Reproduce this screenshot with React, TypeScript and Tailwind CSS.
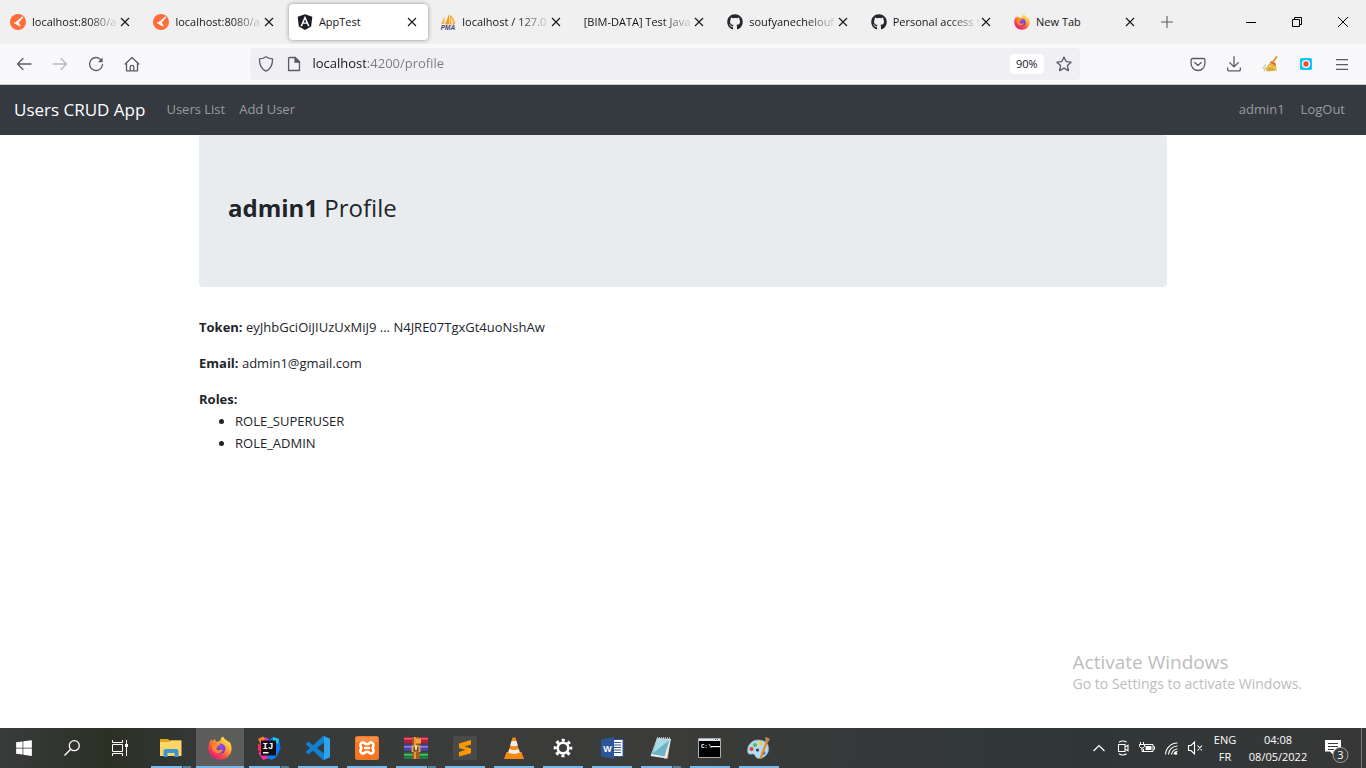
import type { ReactNode } from "react";
import { FaAngular, FaGithub, FaWindows } from "react-icons/fa";

const iconButton = "flex h-8 w-9 shrink-0 items-center justify-center";

/* ---------- Browser icons ---------- */

function PostmanIcon() {
  return (
    <svg viewBox="0 0 16 16" className="size-4 shrink-0">
      <circle cx="8" cy="8" r="8" fill="#ff6c37" />
      <path d="M12.9 2.6 6.4 8.2l3 2.4M12.9 2.9 8 8.7M4 8.4l6.6 3.8" fill="none" stroke="#fff" strokeWidth="1.1" />
      <path d="M6.2 8.2l3.4 2.6" stroke="#fff" strokeWidth="1.6" />
    </svg>
  );
}

function PmaIcon() {
  return (
    <svg viewBox="0 0 16 16" className="size-4 shrink-0">
      <path d="M4.6 2 1 10h3.4z" fill="#f3b566" />
      <path d="M9 .3 5 10.6h4.4z" fill="#f89c0e" />
      <path d="M9.8.6v10h5.6C14.800 6 13 3 9.800.6z" fill="#f7a93c" />
      <path d="M11 3v7l3-1z" fill="#fbd9a2" />
      <text x="8" y="15.600" textAnchor="middle" fontSize="6.500" fontWeight="700" fontStyle="italic" fontFamily="Liberation Sans, sans-serif" fill="#44447c">PMA</text>
    </svg>
  );
}

function FirefoxIcon({ id, className }: { id: string; className: string }) {
  return (
    <svg viewBox="0 0 24 24" className={className}>
      <defs>
        <linearGradient id={id + "a"} x1="0.85" y1="0.1" x2="0.2" y2="0.95">
          <stop offset="0" stopColor="#fff44f" />
          <stop offset="0.35" stopColor="#ffa436" />
          <stop offset="0.65" stopColor="#ff4f3f" />
          <stop offset="1" stopColor="#e31587" />
        </linearGradient>
        <radialGradient id={id + "b"} cx="0.6" cy="0.35" r="0.7">
          <stop offset="0" stopColor="#a347e8" />
          <stop offset="1" stopColor="#4a3fd0" />
        </radialGradient>
      </defs>
      <path
        d="M14.900.4c-1.600 1-2.500 3-2.700 4.600-1.300.1-2.400.4-3.400 1C7.600 5.500 7 4.300 7 3c-1 .5-2 1.500-2.700 2.500-.5-.7-.6-1.900-.5-2.500C1.700 4.800.4 8.900.4 12.400.4 18.600 5.600 23.600 12 23.600c6.300 0 11.600-4.800 11.600-11.200 0-3.300-1.500-6.300-3.200-7.900.4.900.6 1.800.600 2.600-1.200-3-4.500-3.600-6.100-6.700z"
        fill={`url(#${id}a)`}
      />
      <circle cx="12.300" cy="12.600" r="5.200" fill={`url(#${id}b)`} />
      <path
        d="M4.400 8.200c1.600-1 3.500-.9 4.800-.1h3.100c.2 1-1.900 1.900-2.900 2.300-.1 1.300-1.100 1.400-1 2.400.5 1.800 2.700 1.800 4.100 1.200 1.200-.5 2.300-.1 2.300.3-1 2.400-3.300 3.500-6 2.700-3.700-1-5.600-5.300-4.400-8.800z"
        fill="#ff8a2a"
      />
    </svg>
  );
}

function CloseIcon() {
  return (
    <svg viewBox="0 0 10 10" className="size-[10px]" fill="none" stroke="#15141a" strokeWidth="1.100">
      <path d="M1 1l8 8M9 1L1 9" />
    </svg>
  );
}

function BroomIcon() {
  return (
    <svg viewBox="0 0 16 16" className="size-4">
      <path d="M15 .3 11 6" stroke="#c98f2c" strokeWidth="1.600" />
      <path d="M10 4.500c2 .2 3.300 1.600 3.700 3.500l1 6.600-9.200.8C3.500 15 3.500 13 5 10.500z" fill="#e8b23a" />
      <path d="M8.500 5.900 13.700 8.600" stroke="#d9554a" strokeWidth="1.300" />
      <path d="M6.500 14.500l4-5M9.500 14.500l2.500-4.500" stroke="#b9822c" strokeWidth=".6" fill="none" />
      <path d="M7 10l6.500 2" stroke="#f7dc85" strokeWidth="1" />
      <path d="M.8 12.500l3-4M2 15l1.500-3.500" stroke="#b6c6a5" strokeWidth="1.100" />
    </svg>
  );
}

/* ---------- Browser chrome ---------- */

interface TabProps {
  title: string;
  icon?: ReactNode;
  active?: boolean;
  faded?: boolean;
}

function Tab({ title, icon, active, faded }: TabProps) {
  return (
    <div className="min-w-0 flex-1 px-0.5 py-1">
      <div
        className={
          active
            ? "flex h-9 items-center rounded bg-white pr-[11px] pl-2 shadow-[0_0_4px_rgba(0,0,0,0.4)]"
            : "flex h-9 items-center pr-[11px] pl-2"
        }
      >
        <button type="button" role="tab" aria-selected={!!active} className="flex min-w-0 flex-1 items-center gap-1.5">
          {icon}
          <span
            className={
              faded
                ? "min-w-0 flex-1 overflow-hidden mask-r-from-[calc(100%-32px)] text-left whitespace-nowrap"
                : "min-w-0 flex-1 overflow-hidden text-left whitespace-nowrap"
            }
          >
            {title}
          </span>
        </button>
        <button type="button" aria-label={`Close ${title}`} className="shrink-0">
          <CloseIcon />
        </button>
      </div>
    </div>
  );
}

function TabStrip() {
  const tabs: TabProps[] = [
    { title: "localhost:8080/a", icon: <PostmanIcon />, faded: true },
    { title: "localhost:8080/a", icon: <PostmanIcon />, faded: true },
    { title: "AppTest", icon: <FaAngular className="h-[18px] w-4 text-[#1b1d26]" />, active: true },
    { title: "localhost / 127.0", icon: <PmaIcon />, faded: true },
    { title: "[BIM-DATA] Test Java", faded: true },
    { title: "soufyanechelouf", icon: <FaGithub className="size-4 shrink-0 text-[#24292f]" />, faded: true },
    { title: "Personal access t", icon: <FaGithub className="size-4 shrink-0 text-[#24292f]" />, faded: true },
    { title: "New Tab", icon: <FirefoxIcon id="tab" className="size-4 shrink-0" /> },
  ];
  return (
    <div className="flex h-11 items-center bg-[#f0f0f0] text-[11px] text-[#15141a]">
      <div role="tablist" className="flex w-[84%]">
        {tabs.map((tab, i) => (
          <Tab key={i} {...tab} />
        ))}
      </div>
      <button type="button" aria-label="New tab" className="flex h-9 w-10 items-center justify-center">
        <svg viewBox="0 0 12 12" className="size-3" stroke="#5b5b66" strokeWidth="1.100">
          <path d="M6 0v12M0 6h12" />
        </svg>
      </button>
      <div className="ml-auto flex text-black">
        <button type="button" aria-label="Minimize" className="flex h-11 w-[46px] items-center justify-center">
          <svg viewBox="0 0 10 10" className="size-[10px]"><path d="M0 5h10v1H0z" /></svg>
        </button>
        <button type="button" aria-label="Restore" className="flex h-11 w-[46px] items-center justify-center">
          <svg viewBox="0 0 10 10" className="size-[10px]" fill="none" stroke="currentColor">
            <path d="M.5 2.500h7v7h-7zM2.500 2.500v-2h7v7h-2" />
          </svg>
        </button>
        <button type="button" aria-label="Close window" className="flex h-11 w-[46px] items-center justify-center">
          <svg viewBox="0 0 10 10" className="size-[10px]" stroke="currentColor"><path d="M0 0l10 10M10 0L0 10" /></svg>
        </button>
      </div>
    </div>
  );
}

function LineIcon({ children, className = "size-4" }: { children: ReactNode; className?: string }) {
  return (
    <svg viewBox="0 0 16 16" className={className} fill="none" stroke="#5b5b66" strokeWidth="1.300" strokeLinecap="round" strokeLinejoin="round">
      {children}
    </svg>
  );
}

function Toolbar() {
  return (
    <div className="flex h-[41px] items-center border-b border-[#cccccc] bg-[#f9f9fb] px-1.5">
      <button type="button" aria-label="Back" className={iconButton}>
        <LineIcon><path d="M15 8H1.500M7 2.500 1.500 8 7 13.500" /></LineIcon>
      </button>
      <button type="button" aria-label="Forward" className={iconButton + " opacity-40"}>
        <LineIcon><path d="M1 8h13.500M9 2.500 14.500 8 9 13.500" /></LineIcon>
      </button>
      <button type="button" aria-label="Reload" className={iconButton}>
        <LineIcon>
          <path d="M14.500 8.500A6.500 6.500 0 1 1 13 3.800" />
          <path d="M14.600 1.500v4.700H9.900z" fill="#5b5b66" stroke="none" />
        </LineIcon>
      </button>
      <button type="button" aria-label="Home" className={iconButton}>
        <LineIcon>
          <path d="M1.200 8 8 1.500 14.800 8M2.500 7v7.800h11V7M6.200 14.600v-3.400a1.800 1.800 0 0 1 3.600 0v3.400" />
        </LineIcon>
      </button>
      <div className="min-w-0 grow-10 basis-0" />
      <div className="flex h-8 min-w-0 grow-81 basis-0 items-center rounded bg-[#f0eff4] px-2">
        <LineIcon className="size-4 shrink-0">
          <path d="M8 .8C6.500 2 4 2.800 1.500 2.900 1.300 8.500 3 12.800 8 15.200c5-2.400 6.700-6.700 6.500-12.300C12 2.800 9.500 2 8 .8z" />
        </LineIcon>
        <LineIcon className="ml-3 size-4 shrink-0">
          <path d="M3.600 1.500h5.600l4.300 4.300v8.700H2.600V2.500a1 1 0 0 1 1-1z" />
          <path d="M9 1.500v4.700h4.600z" fill="#5b5b66" />
        </LineIcon>
        <input
          aria-label="Address"
          defaultValue="localhost:4200/profile"
          className="ml-2.5 min-w-0 flex-1 bg-[linear-gradient(to_right,#15141a_54px,#7b7a82_54px)] bg-clip-text text-[13px] text-transparent outline-none"
        />
        <button type="button" className="h-5 shrink-0 rounded-sm bg-white px-1.5 text-[11px] text-[#15141a]">90%</button>
        <button type="button" aria-label="Bookmark" className="ml-3 shrink-0">
          <LineIcon>
            <path d="M8 1l2.100 4.600 5 .6-3.700 3.400 1 5L8 12.100l-4.400 2.500 1-5L.9 6.200l5-.6z" />
          </LineIcon>
        </button>
      </div>
      <div className="min-w-0 grow-10 basis-0" />
      <button type="button" aria-label="Save to Pocket" className={iconButton}>
        <svg viewBox="0 0 16 16" className="size-4" fill="none" stroke="#5b5b66" strokeWidth="1.300" strokeLinecap="round" strokeLinejoin="round">
          <path d="M2.600 2.500h10.800a1.500 1.500 0 0 1 1.500 1.500v3.600a6.900 6.900 0 0 1-13.800 0V4a1.500 1.500 0 0 1 1.500-1.500zM4.800 6.500 8 9.500l3.200-3" />
        </svg>
      </button>
      <button type="button" aria-label="Downloads" className={iconButton}>
        <LineIcon>
          <path d="M8 .7v10M3.800 6.800 8 10.900l4.200-4.100M1.700 12v1.700a1.200 1.200 0 0 0 1.200 1.200h10.200a1.200 1.200 0 0 0 1.200-1.200V12" />
        </LineIcon>
      </button>
      <button type="button" aria-label="Clean history" className={iconButton}><BroomIcon /></button>
      <button type="button" aria-label="Screen recorder" className={iconButton}>
        <svg viewBox="0 0 12 12" className="size-3">
          <rect width="12" height="12" rx="1.500" fill="#12c3f4" />
          <circle cx="6" cy="6" r="4" fill="#fff" />
          <circle cx="6" cy="6" r="2.700" fill="#f44a35" />
        </svg>
      </button>
      <button type="button" aria-label="Menu" className={iconButton}>
        <svg viewBox="0 0 12 11" className="h-[11px] w-3" fill="#5b5b66">
          <path d="M0 0h12v1.200H0zM0 5h12v1.200H0zM0 9.800h12V11H0z" />
        </svg>
      </button>
    </div>
  );
}

/* ---------- Web page ---------- */

function Navbar() {
  return (
    <nav className="flex h-[50px] items-center bg-[#343a40] px-3.5 text-[13px] text-[#999c9f]">
      <a href="#home" className="mr-3.5 text-[17px] text-white">Users CRUD App</a>
      <a href="#users" className="px-[7px]">Users List</a>
      <a href="#add" className="px-[7px]">Add User</a>
      <div className="ml-auto flex gap-0.5">
        <a href="#profile" className="px-[7px]">admin1</a>
        <a href="#logout" className="px-[7px]">LogOut</a>
      </div>
    </nav>
  );
}

function Profile() {
  return (
    <main className="mx-auto w-full max-w-[968px] text-[13px] leading-[22px] text-[#212529]">
      <header className="mb-[29px] rounded bg-[#e9ecef] px-[29px] pt-[58px] pb-16">
        <h3 className="text-2xl leading-[30px]">
          <strong>admin1</strong> Profile
        </h3>
      </header>
      <p className="mb-3.5"><strong>Token:</strong> eyJhbGciOiJIUzUxMiJ9 ... N4JRE07TgxGt4uoNshAw</p>
      <p className="mb-3.5"><strong>Email:</strong> admin1@gmail.com</p>
      <strong>Roles:</strong>
      <ul className="list-disc pl-9">
        <li>ROLE_SUPERUSER</li>
        <li>ROLE_ADMIN</li>
      </ul>
    </main>
  );
}

/* ---------- Taskbar ---------- */

function ExplorerIcon() {
  return (
    <svg viewBox="0 0 24 24" className="size-6">
      <path d="M1 3h8l1.500 1.500H22V20H1z" fill="#e8a317" />
      <path d="M1 6h9l1.500-1.500H22.500V20H1z" fill="#ffd766" />
      <path d="M4.500 21v-6a2 2 0 0 1 2-2h11a2 2 0 0 1 2 2v6h-4v-4h-7v4z" fill="#3d93d9" />
    </svg>
  );
}

function IntelliJIcon() {
  return (
    <svg viewBox="0 0 24 24" className="size-6">
      <path d="M1 3 6 .500l6 5L6 12z" fill="#fc801d" />
      <path d="M1 8 7 6l3 10-5 2-4-4z" fill="#fe2857" />
      <path d="M1 17l6-3 6 8-7 2z" fill="#f0308f" />
      <path d="M12 4l4-3 6 2 1.500 9-4 9-5 3-5-3z" fill="#087cfa" />
      <path d="M16 1l6 2-1 5-5-3z" fill="#20c7f0" />
      <path d="M8 1l4 2-2 4-3-2z" fill="#d436c5" />
      <path d="M4 4.500h15v15H4z" fill="#160d14" />
      <text x="5.500" y="12.500" fontSize="9" fontWeight="700" fontFamily="Liberation Mono, monospace" fill="#fff">IJ</text>
      <path d="M6 16h5.500v1.500H6z" fill="#fff" />
    </svg>
  );
}

function VsCodeIcon() {
  return (
    <svg viewBox="0 0 24 24" className="size-6">
      <path
        d="M23.150 2.587L18.210.210a1.494 1.494 0 0 0-1.705.290l-9.460 8.630-4.120-3.128a.999.999 0 0 0-1.276.057L.327 7.261A1 1 0 0 0 .326 8.740L3.899 12 .326 15.260a1 1 0 0 0 .001 1.479L1.650 17.940a.999.999 0 0 0 1.276.057l4.120-3.128 9.460 8.630a1.492 1.492 0 0 0 1.704.290l4.942-2.377A1.500 1.500 0 0 0 24 20.060V3.939a1.500 1.500 0 0 0-.850-1.352zm-5.146 14.861L10.826 12l7.178-5.448v10.896z"
        fill="#1080cf"
      />
      <path d="M18 .2 23.200 2.600A1.500 1.500 0 0 1 24 4v16a1.500 1.500 0 0 1-.8 1.400L18 23.800z" fill="#2fa4ee" />
    </svg>
  );
}

function XamppIcon() {
  return (
    <svg viewBox="0 0 24 24" className="size-6">
      <rect width="24" height="24" rx="2.500" fill="#f37623" />
      <path d="M1 1h22v5H1z" fill="#fb9e5c" opacity=".6" />
      <path
        d="M8 6.500c-2.500 0-3.500 2.600-1.600 5.500-1.900 2.900-.9 5.500 1.600 5.500 1.600 0 2.200-1.800 4-1.800s2.400 1.800 4 1.800c2.500 0 3.500-2.600 1.600-5.500 1.900-2.900.9-5.500-1.600-5.500-1.600 0-2.200 1.800-4 1.800s-2.400-1.800-4-1.800z"
        fill="none"
        stroke="#fff"
        strokeWidth="2.600"
      />
      <path d="M9 12h6" stroke="#fff" strokeWidth="2.400" />
    </svg>
  );
}

function WinRarIcon() {
  return (
    <svg viewBox="0 0 24 24" className="size-6">
      <path d="M0 1h24v6.500H0z" fill="#b3203c" />
      <path d="M0 2h24v1.500H0z" fill="#e65c74" />
      <path d="M0 8.500h24V15H0z" fill="#4b45a5" />
      <path d="M0 10h24v1.500H0z" fill="#8e88dc" />
      <path d="M0 16.500h24V23H0z" fill="#1e7a3e" />
      <path d="M0 18h24v1.500H0z" fill="#5dbb6f" />
      <path d="M8.500 1h7v22h-7z" fill="#b4591b" />
      <path d="M10 1h2v22h-2z" fill="#e29a42" />
      <path d="M12 2.500h5v5h-5z" fill="#f0a63a" />
      <path d="M7.500 9.500h9V16h-9z" fill="#e0a55a" />
      <path d="M9.500 11h5v4.500h-5z" fill="#7a3c16" />
      <path d="M11 9.500h2V14h-2z" fill="#f3e4bd" />
    </svg>
  );
}

function SublimeIcon() {
  return (
    <svg viewBox="0 0 24 24" className="size-6">
      <rect width="24" height="24" rx="1.500" fill="#4a4a4a" />
      <path d="M18 4v4.500L11.500 10.500 18 12.400v4.800L6 20.500V16l6.500-2L6 12V7.400z" fill="#ff9800" />
    </svg>
  );
}

function VlcIcon() {
  return (
    <svg viewBox="0 0 24 24" className="size-6">
      <path d="M4.500 16h15l2.500 7H2z" fill="#f58a12" />
      <path d="M10.500 1.500h3L18.500 19c-3 2-10 2-13 0z" fill="#f58a12" />
      <path d="M9.500 5h5l1.300 4.500c-2 1-5.600 1-7.600 0zM7.200 13c3 1.300 6.600 1.300 9.600 0l1 3.600c-3 1.700-8.600 1.700-11.600 0z" fill="#eeeeee" />
    </svg>
  );
}

function SettingsIcon() {
  return (
    <svg viewBox="0 0 24 24" className="size-6" fill="none" stroke="#fff">
      <circle cx="12" cy="12" r="5.300" strokeWidth="2.600" />
      <circle cx="12" cy="12" r="7.800" strokeWidth="3" strokeDasharray="3.060 3.066" strokeDashoffset="1.530" />
    </svg>
  );
}

function WordIcon() {
  return (
    <svg viewBox="0 0 24 24" className="size-6">
      <path d="M12 3.500h11v17H12z" fill="#fff" stroke="#2b579a" />
      <path d="M14 6.500h7M14 9h7M14 11.500h7M14 14h7M14 16.500h7" stroke="#2b579a" strokeWidth="1.200" />
      <path d="M1 3.500 14 1v22L1 20.500z" fill="#2b579a" />
      <text x="7.500" y="15.500" textAnchor="middle" fontSize="9" fontWeight="700" fontFamily="Liberation Sans, sans-serif" fill="#fff">W</text>
    </svg>
  );
}

function NotepadIcon() {
  return (
    <svg viewBox="0 0 24 24" className="size-6">
      <path d="M21.500 3 19 22.500l-4 .5z" fill="#b58a3f" />
      <path d="M8 2l14 1-4 19.500L1.500 20z" fill="#e8eeee" />
      <path d="M8.500 2.500 20.500 4 15.500 20.500 2.500 18z" fill="#6fb4c6" />
      <path d="M8.500 2.500 20.500 4 4 17z" fill="#aadbe2" />
      <path d="M8 2h13" stroke="#d4d4d4" strokeWidth="1.400" strokeDasharray="1 1" />
    </svg>
  );
}

function TerminalIcon() {
  return (
    <svg viewBox="0 0 24 24" className="size-6">
      <path d="M.5 2.500h22v19H.5z" fill="#000" stroke="#a9adb0" />
      <path d="M1 3h21v2H1z" fill="#dce4ef" />
      <path d="M17 3.500h1M19 3.500h1" stroke="#526b9b" />
      <text x="3" y="11.500" fontSize="6" fontWeight="700" fontFamily="Liberation Mono, monospace" fill="#fff">C:\</text>
      <path d="M13 10h9v1.200h-9z" fill="#fff" />
    </svg>
  );
}

function PaintIcon() {
  return (
    <svg viewBox="0 0 24 24" className="size-6">
      <path d="M11 4C5 4 .500 9 .500 14.500c0 4 2.500 4 4.500 3.500s3 1 3.500 2.500 3 2.500 6 1.500c5-1.500 7.500-6 7-10.500S17 4 11 4z" fill="#b5dbef" stroke="#7ca8c6" strokeWidth=".8" />
      <circle cx="4.500" cy="13" r="2" fill="#e1463b" />
      <circle cx="8" cy="9" r="2" fill="#54b948" />
      <circle cx="13.500" cy="7.500" r="2" fill="#f8cd2e" />
      <circle cx="16.500" cy="17" r="2" fill="#4a74c9" />
      <circle cx="10.500" cy="14" r="1.600" fill="#394144" />
      <path d="M20 5 13.500 22.500" stroke="#e88b27" strokeWidth="2.200" />
      <path d="M18.500.8 23 3l-2.200 3.800-2.600-1.200z" fill="#bd8650" />
    </svg>
  );
}

interface TaskbarApp {
  name: string;
  icon: ReactNode;
  active?: boolean;
  stacked?: boolean;
}

const apps: TaskbarApp[] = [
  { name: "File Explorer", icon: <ExplorerIcon />, stacked: true },
  { name: "Firefox", icon: <FirefoxIcon id="task" className="size-6" />, active: true },
  { name: "IntelliJ IDEA", icon: <IntelliJIcon />, stacked: true },
  { name: "Visual Studio Code", icon: <VsCodeIcon /> },
  { name: "XAMPP", icon: <XamppIcon /> },
  { name: "WinRAR", icon: <WinRarIcon />, stacked: true },
  { name: "Sublime Text", icon: <SublimeIcon /> },
  { name: "VLC", icon: <VlcIcon /> },
  { name: "Settings", icon: <SettingsIcon /> },
  { name: "Word", icon: <WordIcon /> },
  { name: "Notepad", icon: <NotepadIcon />, stacked: true },
  { name: "Command Prompt", icon: <TerminalIcon /> },
  { name: "Paint", icon: <PaintIcon /> },
];

function AppButton({ app }: { app: TaskbarApp }) {
  return (
    <button
      type="button"
      aria-label={app.name}
      className={app.active ? "flex h-10 w-12 flex-col items-center bg-[#5c5d5a]" : "flex h-10 w-12 flex-col items-center"}
    >
      <span className="flex flex-1 items-center pt-0.5">{app.icon}</span>
      <span className={app.active ? "flex h-0.5 w-full" : "flex h-0.5 w-10"}>
        <span className="flex-1 bg-[#76b9ed]" />
        {app.stacked && <span className="w-[9px] border-l border-[#3a4148] bg-[#57809e]" />}
      </span>
    </button>
  );
}

function Taskbar() {
  return (
    <footer className="flex h-10 items-center bg-[linear-gradient(to_right,#383b3c_0%,#2c3024_8%,#343836_14%,#3a3c3b_30%,#3b3c39_50%,#343839_65%,#303637_80%,#373737_100%)] text-[11px] text-white">
      <button type="button" aria-label="Start" className="flex h-10 w-12 items-center justify-center">
        <FaWindows className="size-[18px]" />
      </button>
      <button type="button" aria-label="Search" className="flex h-10 w-12 items-center justify-center">
        <svg viewBox="0 0 16 16" className="size-4" fill="none" stroke="#fff" strokeWidth="1.300">
          <circle cx="10.300" cy="5.700" r="5" />
          <path d="M6.700 9.300.5 15.500" />
        </svg>
      </button>
      <button type="button" aria-label="Task view" className="flex h-10 w-12 items-center justify-center">
        <svg viewBox="0 0 16 16" className="size-4" fill="none" stroke="#fff">
          <path d="M.5 4.500h10v7H.5zM.5 0v2.500h10V0M.5 16v-2.500h10V16M14.500 0v16" />
          <path d="M13 4h3v3h-3z" fill="#fff" stroke="none" />
        </svg>
      </button>
      <div className="ml-[3px] flex gap-px">
        {apps.map((app) => (
          <AppButton key={app.name} app={app} />
        ))}
      </div>
      <div className="ml-auto flex h-10 items-center">
        <button type="button" aria-label="Show hidden icons" className="flex w-6 justify-center">
          <svg viewBox="0 0 12 12" className="size-3" fill="none" stroke="#fff" strokeWidth="1.200"><path d="M.5 9 6 3.500 11.500 9" /></svg>
        </button>
        <button type="button" aria-label="Meet now" className="flex w-6 justify-center">
          <svg viewBox="0 0 16 16" className="size-4" fill="none" stroke="#fff" strokeWidth="1.100">
            <path d="M3.500 4.500h6.500v7H3.500zM10 7l3-1.800v5.600L10 9M4 2.200c2-1.600 5.500-1.600 7.500 0M4 13.800c2 1.600 5.500 1.600 7.500 0" />
          </svg>
        </button>
        <button type="button" aria-label="Battery" className="flex w-6 justify-center">
          <svg viewBox="0 0 16 16" className="size-4" fill="none" stroke="#fff">
            <path d="M5.500 4.500h8.500v7H4.500V9M14.500 6.500h1v3h-1M1.500 2v2M4.500 2v2M.5 4.500h5v2L4 8H2L.5 6.500zM3 8v3.500h2" />
            <path d="M6.500 6h6v4h-6z" fill="#fff" stroke="none" />
          </svg>
        </button>
        <button type="button" aria-label="Wi-Fi" className="flex w-6 justify-center">
          <svg viewBox="0 0 14 14" className="size-[14px]" fill="none" stroke="#fff" strokeWidth="1.100">
            <path d="M1.500 13.500A12 12 0 0 1 13.500 2M4.500 13.500a9 9 0 0 1 9-8.500M7.500 13.500a6 6 0 0 1 6-5.500M10 13.500a3.500 3.500 0 0 1 3.500-3" />
            <circle cx="12" cy="12.500" r="1.300" fill="#fff" stroke="none" />
          </svg>
        </button>
        <button type="button" aria-label="Volume muted" className="flex w-6 justify-center">
          <svg viewBox="0 0 16 16" className="size-4" fill="none" stroke="#fff" strokeWidth="1.100">
            <path d="M1.500 5.500H4l3.500-3.500v12L4 10.500H1.500zM10.500 5.500l4.500 5M15 5.500l-4.500 5" />
          </svg>
        </button>
        <button type="button" className="w-9 text-center leading-[17px]">
          <span className="block">ENG</span>
          <span className="block">FR</span>
        </button>
        <button type="button" className="w-[70px] text-center leading-[17px]">
          <span className="block">04:08</span>
          <span className="block">08/05/2022</span>
        </button>
        <button type="button" aria-label="3 notifications" className="ml-0.5 flex w-[42px] justify-center">
          <svg viewBox="0 0 24 24" className="size-6 overflow-visible">
            <path d="M1 4h16v11.500H9.500V19L6 15.500H1z" fill="#fff" />
            <path d="M4 7.500h10M4 10.500h10M4 13.500h6" stroke="#383a3b" />
            <circle cx="16.500" cy="19" r="7.500" fill="#3a3c3d" stroke="#a0a0a0" />
            <text x="16.500" y="23" textAnchor="middle" fontSize="11" fontFamily="Open Sans, sans-serif" fill="#fff">3</text>
          </svg>
        </button>
        <button type="button" aria-label="Show desktop" className="ml-1 h-10 w-[5px] border-l border-[#777a7a]" />
      </div>
    </footer>
  );
}

export default function App() {
  return (
    <div className="flex min-h-screen flex-col bg-white font-['Open_Sans','Noto_Sans',sans-serif]">
      <TabStrip />
      <Toolbar />
      <Navbar />
      <div className="relative flex-1">
        <Profile />
        <aside className="absolute right-16 bottom-[34px] text-[#bdbdbd]">
          <p className="text-[19px] leading-6">Activate Windows</p>
          <p className="text-[14px] leading-5">Go to Settings to activate Windows.</p>
        </aside>
      </div>
      <Taskbar />
    </div>
  );
}
